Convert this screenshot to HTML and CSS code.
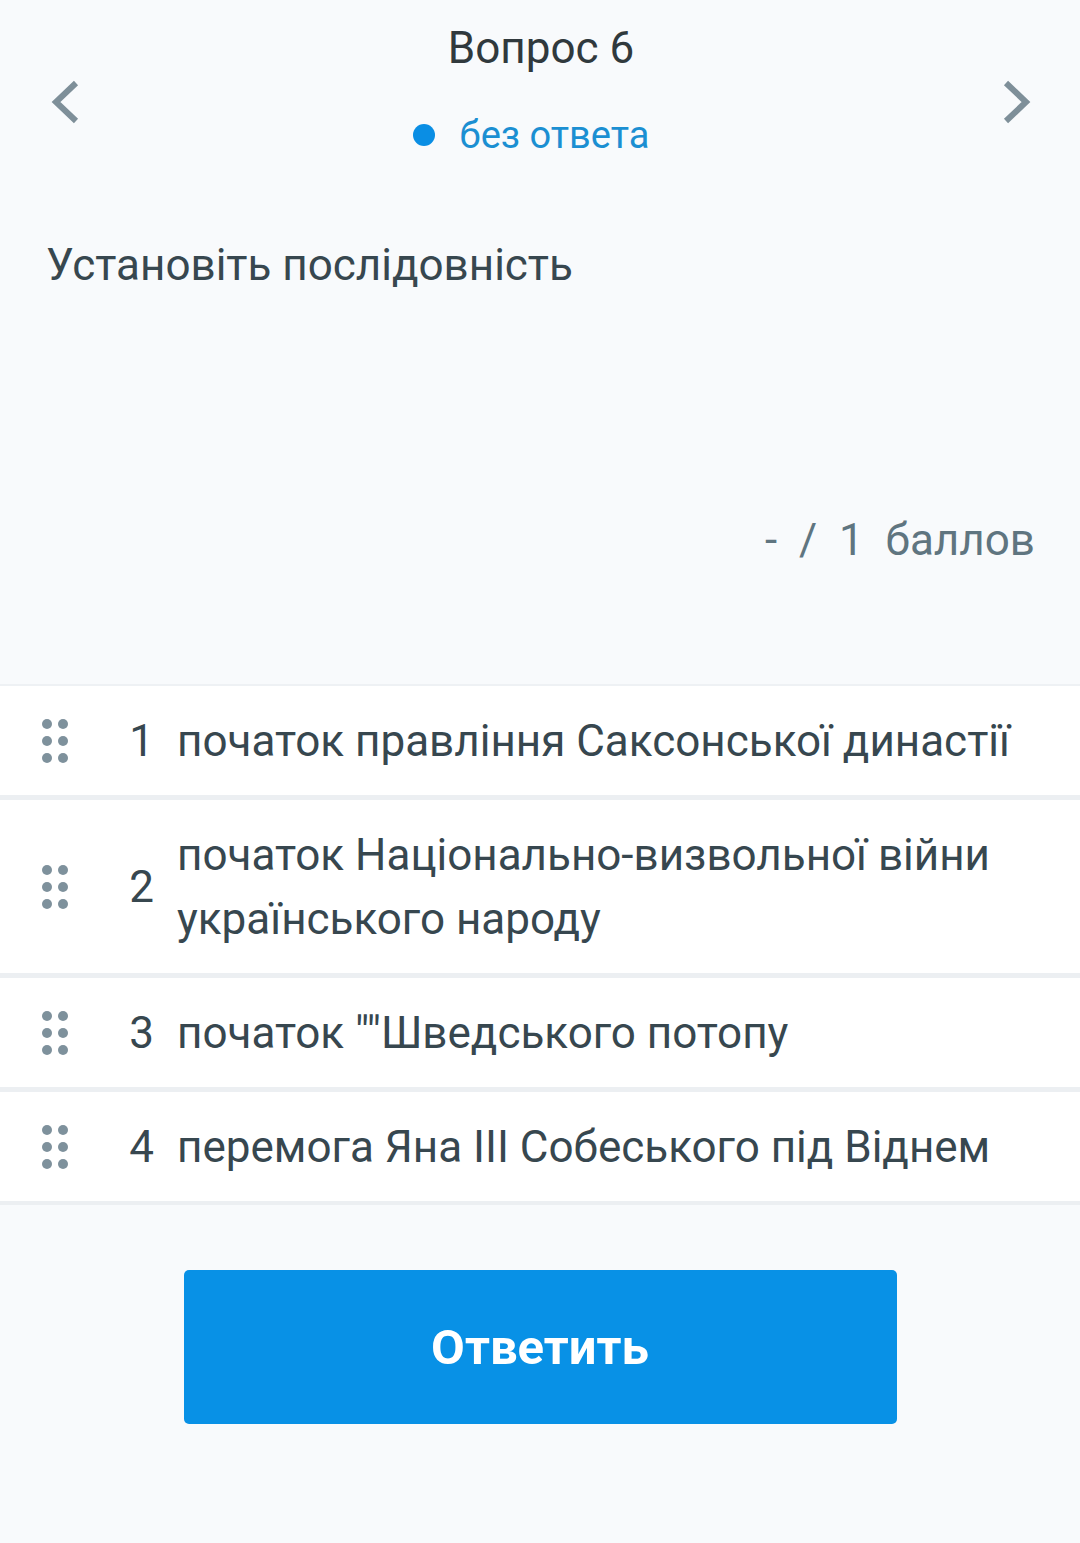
FILE: index.html
```html
<!DOCTYPE html>
<html lang="ru">
<head>
  <meta charset="UTF-8">
  <meta name="viewport" content="width=device-width, initial-scale=1.0">
  <title>Вопрос 6</title>
  <link rel="stylesheet" href="styles.css">
</head>
<body>
  <div id="header">
    <button class="nav-btn" aria-label="Назад">
      <svg width="30" height="44" viewBox="0 0 30 44"><path d="M26 3 L6 22 L26 41" fill="none" stroke="#7e8f99" stroke-width="6"/></svg>
    </button>
    <div class="title-block">
      <div class="title">Вопрос 6</div>
      <div class="status"><span class="dot"></span>без ответа</div>
    </div>
    <button class="nav-btn" aria-label="Вперёд">
      <svg width="30" height="44" viewBox="0 0 30 44"><path d="M4 3 L24 22 L4 41" fill="none" stroke="#7e8f99" stroke-width="6"/></svg>
    </button>
  </div>

  <div id="question">
    <p class="question-text">Установіть послідовність</p>
    <div class="score">-&nbsp; /&nbsp; 1&nbsp; баллов</div>
  </div>

  <div id="answers">
    <div class="answer-row">
      <span class="handle"><i></i><i></i><i></i><i></i><i></i><i></i></span>
      <span class="num">1</span>
      <span class="label">початок правління Саксонської династії</span>
    </div>
    <div class="answer-row">
      <span class="handle"><i></i><i></i><i></i><i></i><i></i><i></i></span>
      <span class="num">2</span>
      <span class="label">початок Національно-визвольної війни українського народу</span>
    </div>
    <div class="answer-row">
      <span class="handle"><i></i><i></i><i></i><i></i><i></i><i></i></span>
      <span class="num">3</span>
      <span class="label">початок ""Шведського потопу</span>
    </div>
    <div class="answer-row">
      <span class="handle"><i></i><i></i><i></i><i></i><i></i><i></i></span>
      <span class="num">4</span>
      <span class="label">перемога Яна ІІІ Собеського під Віднем</span>
    </div>
  </div>

  <div id="actions">
    <button class="submit-btn">Ответить</button>
  </div>
</body>
</html>
```

FILE: styles.css
```css
body { font-family: Roboto, "Noto Sans", sans-serif; margin: 0; background: #f8fafc; color: #37474f; min-height: 100vh; }
#header { display: flex; justify-content: space-between; align-items: flex-start; padding: 20px 48px 0 50px; }
.nav-btn { background: none; border: none; padding: 0; margin-top: 60px; cursor: pointer; display: flex; }
.title-block { display: flex; flex-direction: column; align-items: center; }
.title { font-size: 44px; line-height: 56px; color: #30393d; }
.status { display: flex; align-items: center; font-size: 38px; line-height: 50px; color: #1b8fd2; margin-top: 34px; margin-right: 20px; }
.dot { width: 22px; height: 22px; border-radius: 50%; background: #0a8ee4; margin-right: 25px; }
#question { padding: 0 45px 0 46px; }
.question-text { margin: 0; padding-top: 77px; font-size: 44px; line-height: 56px; color: #37474f; }
.score { text-align: right; font-size: 44px; line-height: 56px; color: #5f7580; margin-top: 219px; height: 172px; }
#answers { border-top: 2px solid #eef1f4; background: #eceff2; display: flex; flex-direction: column; gap: 5px; border-bottom: 4px solid #eceff2; }
.answer-row { display: flex; align-items: center; background: #fff; padding: 23px 20px 22px 42px; min-height: 64px; }
.handle { display: grid; grid-template-columns: 10px 10px; gap: 7px 6px; width: 26px; flex: none; }
.handle i { width: 10px; height: 10px; border-radius: 50%; background: #7e919c; display: block; }
.num { font-size: 44px; line-height: 64px; width: 40px; flex: none; text-align: right; margin-left: 46px; }
.label { font-size: 44px; line-height: 64px; padding-left: 23px; }
#actions { display: flex; justify-content: center; padding-top: 65px; }
.submit-btn { width: 713px; height: 154px; border: none; border-radius: 5px; background: #0891e6; color: #fff; font-family: Roboto, sans-serif; font-weight: 700; font-size: 49px; cursor: pointer; }
```
